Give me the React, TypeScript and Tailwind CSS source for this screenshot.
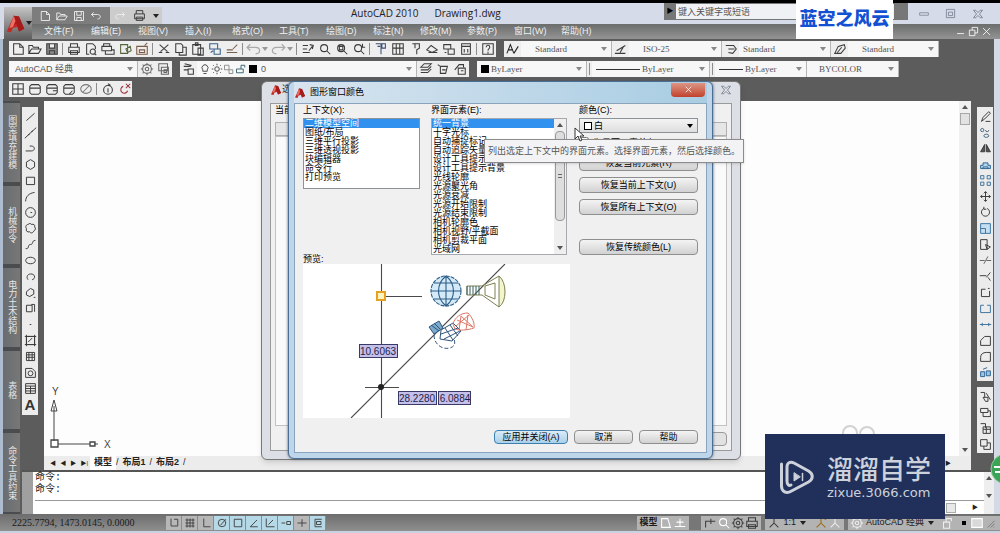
import React from 'react';

interface GlyphProps {
  d: string;
  color?: string;
  fill?: string;
  size?: number;
}

const Glyph: React.FC<GlyphProps> = ({ d, color = '#3c3c3c', fill = 'none', size = 14 }) => (
  <svg width={size} height={size} viewBox="0 0 16 16" fill={fill} stroke={color} strokeWidth="1.2" className="shrink-0">
    <path d={d} />
  </svg>
);

type Icon = { name: string; d: string; color?: string; fill?: string };

const NEW = 'M3 2h7l4 4v8H3zM10 2v4h4';
const OPEN = 'M1 13V4h4l1 2h6v2M1 13l3-5h11l-3 5z';
const SAVE = 'M2 2h12v12H2zM5 2v5h6V2M5 14v-4h6v4';
const PRINT = 'M4 6V2h8v4M2 6h12v6H2zM4 10h8v4H4z';
const UNDO = 'M2 6h8c5 0 5 6 0 6M5 3L2 6l3 3';
const REDO = 'M14 6H6c-5 0-5 6 0 6M11 3l3 3-3 3';
const LAYERS = 'M2 6l4-4h8l-4 4zM2 9h8l4-4M2 12h8l4-4';
const ZOOM = 'M11 7a4 4 0 1 1-8 0 4 4 0 0 1 8 0M10 10l4 4';
const GEAR = 'M13 8a5 5 0 1 1-10 0 5 5 0 0 1 10 0M10 8a2 2 0 1 1-4 0 2 2 0 0 1 4 0M8 1v2M8 13v2M1 8h2M13 8h2M3 3l1 1M12 12l1 1M13 3l-1 1M4 12l-1 1';
const BOX = 'M2 5l2-2h8l2 2v7l-2 2H4l-2-2zM2 7h12';

const standardGroups: Icon[][] = [
  [
    { name: '新建', d: NEW },
    { name: '打开', d: OPEN },
    { name: '保存', d: SAVE, fill: '#8a8a8a' },
  ],
  [
    { name: '打印', d: PRINT },
    { name: '打印预览', d: 'M3 2h7l3 3v3M3 2v12h3M13 11a3 3 0 1 1-6 0 3 3 0 0 1 6 0M12 13l2 2' },
    { name: '发布', d: 'M3 5V2h7v3M1 5h11v5H1zM5 10v4h10V9h-3' },
    { name: '三维DWF', d: 'M3 3h8v10H3zM9 8l5-3 1 5-4 2z', color: '#53663c' },
    { name: '电子传递', d: 'M2 5h12v9H2zM5 9h6v3H5zM11 4l3-3', color: '#7b5a46' },
  ],
  [
    { name: '剪切', d: 'M3 3l9 8M13 3l-9 8M2 12h4M10 12h4' },
    { name: '复制', d: 'M2 2h6l2 2v8H2zM6 12v3h8V6h-4' },
    { name: '粘贴', d: 'M2 3h9v11H2zM5 1h3v3H5zM8 7h6v8H8z' },
    { name: '粘贴为块', d: 'M2 2h9v6H2zM7 8h7v6H7zM3 12l3-2', color: '#39608a' },
    { name: '特性匹配', d: 'M2 9h7M2 12h12M9 8l5-5', color: '#75604d' },
  ],
];

const zoomIcons: Icon[] = [
  { name: '平移', d: 'M2 4h6M2 8h5M2 12h8M9 10l4-5M10 3l4 1-1 4' },
  { name: '实时缩放', d: ZOOM },
  { name: '窗口缩放', d: ZOOM + 'M5 5h4v4H5z' },
  { name: '缩放上一个', d: ZOOM + 'M12 2v4h3' },
];

const paletteIcons: Icon[] = [
  { name: '特性', d: 'M2 2h6v12M4 5h3M9 2h4v5H9z', color: '#3a4f74' },
  { name: '设计中心', d: 'M2 2h12v12H2zM6 2v12M10 2v12M2 7h12' },
  { name: '工具选项板', d: 'M5 2h8v5l-3 2v5M8 2v5' },
  { name: '图纸集', d: 'M2 9l5-5 7 5-6 3zM4 12h10' },
  { name: '标记集', d: 'M2 3h8v5H2zM7 8h7v6H7zM3 12h2' },
  { name: '计算器', d: 'M3 2h10v12H3zM3 5h10M6 8v4M10 8v4' },
];

const orbitIcons: Icon[] = [
  { name: '视口', d: 'M2 2h12v12H2zM8 2v12M2 8h12' },
  { name: '上一视口', d: BOX },
  { name: '俯视', d: BOX + 'M9 10h5' },
  { name: '仰视', d: BOX + 'M8 14l4-4' },
  { name: '消隐', d: 'M14 8a6 5 0 1 1-12 0 6 5 0 0 1 12 0M4 12l8-8', color: '#777777' },
];

const drawIcons: Icon[] = [
  { name: '直线', d: 'M3 13L13 4' },
  { name: '构造线', d: 'M1 15L15 2M5 11l2-1M9 7l2-1' },
  { name: '多段线', d: 'M2 11h7c5 0 5-6 0-6H7' },
  { name: '多边形', d: 'M8 2l5 3v6l-5 3-5-3V5z' },
  { name: '矩形', d: 'M3 4h10v9H3z' },
  { name: '圆弧', d: 'M2 14c0-6 4-10 11-11' },
  { name: '圆', d: 'M14 8A6 6 0 1 1 2 8a6 6 0 0 1 12 0M8 8h2' },
  { name: '修订云线', d: 'M5 3c2-2 4-1 4 0 3-1 5 1 4 3 2 2 1 4-1 5-1 3-4 3-5 1-3 1-5-1-4-4-2-2 0-5 2-5z' },
  { name: '样条曲线', d: 'M2 13c5 1 2-5 6-5s1-5 6-5' },
  { name: '椭圆', d: 'M14 8a6 4 0 1 1-12 0 6 4 0 0 1 12 0' },
  { name: '椭圆弧', d: 'M5 12c-3-4 0-8 5-7 4 1 4 6 0 7' },
  { name: '插入块', d: 'M3 7l5-4 4 2v5l-5 3-4-2zM12 14h2' },
  { name: '创建块', d: 'M3 4h7v8H3zM9 3h4v9' },
  { name: '点', d: 'M7 8h2' },
  { name: '图案填充', d: 'M3 3h10v10H3zM1 3h14M1 13h14M3 1v14M13 1v14M5 10l5-5' },
  { name: '渐变色', d: 'M3 3h10v10H3zM3 6h10M3 9h10M6 3v10M10 3v10' },
  { name: '面域', d: 'M2 3h8l4 4v7H2zM11 9a3 3 0 1 1-6 0 3 3 0 0 1 6 0' },
  { name: '表格', d: 'M2 2h12v12H2zM2 5h12M2 8h12M2 11h12M8 5v9' },
];

const modifyIcons: Icon[] = [
  { name: '删除', d: 'M3 14l2-5 7-7 2 2-7 7zM8 14h6' },
  { name: '复制对象', d: 'M6 5a2 2 0 1 1-4 0 2 2 0 0 1 4 0M12 5a2 2 0 1 1-4 0M12 12a3 2 0 1 1-6 0 3 2 0 0 1 6 0', color: '#4b6c86' },
  { name: '镜像', d: 'M7 3v9H2zM9 3v9h5z', fill: '#555555' },
  { name: '偏移', d: 'M2 13V9h3V6h6v3h3v4zM5 13v-2h6v2', color: '#2d6594', fill: '#b7d3e8' },
  { name: '阵列', d: 'M2 2h4v4H2zM10 2h4v4h-4zM2 10h4v4H2zM10 10h4v4h-4z', color: '#40739c' },
  { name: '移动', d: 'M8 2v12M2 8h12M6 4l2-2 2 2M6 12l2 2 2-2M4 6L2 8l2 2M12 6l2 2-2 2' },
  { name: '旋转', d: 'M10 3a5 5 0 1 1-4 0M6 1v3h3' },
  { name: '缩放', d: 'M2 2h12v12H2zM2 8h6v6', color: '#3b77a5', fill: '#c5dff1' },
  { name: '拉伸', d: 'M2 2h8v12H2zM8 8l6 3-4 3z' },
  { name: '修剪', d: 'M1 8h6M9 8h6M6 12l5-9', color: '#666666' },
  { name: '延伸', d: 'M1 7h8M9 9l5-6M11 9l3 4' },
  { name: '打断于点', d: 'M3 13V4h5M13 6v7H3M11 3h2' },
  { name: '打断', d: 'M6 4H2v9h12V4h-4', color: '#40739c' },
  { name: '合并', d: 'M1 8h14M4 6v4M12 6v4', color: '#40739c' },
  { name: '倒角', d: 'M2 14V8l5-5h7v11z' },
  { name: '圆角', d: 'M2 14V9c0-4 3-6 7-6h5v11z' },
  { name: '分解', d: 'M2 7h5v6H2zM9 6h5v6H9zM5 4l5-2', color: '#2d6594', fill: '#9dc4e0' },
];

const orderIcons: Icon[] = [
  { name: '前置', d: 'M2 3h5v6M5 9h6v5H8zM9 4l5 8' },
  { name: '后置', d: 'M2 3h9v5H2zM5 8v5h9V6h-3' },
  { name: '置于对象之上', d: 'M2 2h6v5M5 6h9v8H5zM5 9h9M9 6v8' },
  { name: '置于对象之下', d: 'M2 2h8v8H2zM6 10v4h8V6h-4' },
];

const snapModes: { name: string; d: string; on: boolean }[] = [
  { name: '捕捉', d: 'M4 2v10h9V3H8', on: false },
  { name: '栅格', d: 'M2 4h12M2 8h12M2 12h12M4 2v12M8 2v12M12 2v12', on: false },
  { name: '正交', d: 'M5 2v11h9', on: false },
  { name: '极轴', d: 'M13 8A5 5 0 1 1 3 8a5 5 0 0 1 10 0M6 11l7-8', on: true },
  { name: '对象捕捉', d: 'M3 3h10v10H3z', on: true },
  { name: '对象追踪', d: 'M13 13H3l9-9', on: true },
  { name: '动态UCS', d: 'M3 2v11h11M6 10l6-6', on: true },
  { name: '动态输入', d: 'M2 8h5M9 6h5v4H9z', on: true },
  { name: '线宽', d: 'M2 8h12M8 3v10', on: false },
  { name: '快捷特性', d: 'M4 3h9M4 3v10h9M6 6h6v4H6z', on: true },
];

const menus = ['文件(F)', '编辑(E)', '视图(V)', '插入(I)', '格式(O)', '工具(T)', '绘图(D)', '标注(N)', '修改(M)', '参数(P)', '窗口(W)', '帮助(H)'];
const paletteTabs = ['图案填充建模', '机械命令', '电力土木结构', '表格', '命令工具约束'];
const contexts = ['二维模型空间', '图纸/布局', '三维平行投影', '三维透视投影', '块编辑器', '命令行', '打印预览'];
const elements = [
  '统一背景', '十字光标', '自动捕捉标记', '自动追踪矢量', '设计工具提示', '设计工具提示背景', '光线轮廓', '光源聚光角',
  '光源衰减', '光源开始限制', '光源结束限制', '相机轮廓色', '相机视野/平截面', '相机剪裁平面', '光域网',
];

const ToolButton: React.FC<{ icon: Icon }> = ({ icon }) => (
  <button type="button" aria-label={icon.name} className="flex h-4 w-[17px] shrink-0 items-center justify-center">
    <Glyph d={icon.d} color={icon.color} fill={icon.fill} />
  </button>
);

const Separator = () => <span className="mx-0.5 h-3 w-px shrink-0 bg-[#8c8c8c]" />;

const Bar: React.FC<{ children: React.ReactNode; className?: string }> = ({ children, className = '' }) => (
  <div className={`flex h-4 shrink-0 items-center bg-[#eeeeee] ${className}`}>{children}</div>
);

const Caret: React.FC<{ up?: boolean; color?: string }> = ({ up = false, color = '#555555' }) => (
  <svg width="6" height="4" viewBox="0 0 6 4" fill={color} className="shrink-0">
    <path d={up ? 'M0 4h6L3 0z' : 'M0 0h6L3 4z'} />
  </svg>
);

const Picker: React.FC<{ label: string; value: string; className?: string; pad?: string; before?: React.ReactNode }> = ({
  label, value, className = '', pad = 'pl-2', before,
}) => (
  <span className={`flex h-full min-w-0 shrink-0 items-center border-r border-[#b5b5b5] bg-[#f7f7f7] pr-1 ${className}`}>
    {before}
    <select
      aria-label={label}
      className={`h-full min-w-0 flex-1 appearance-none bg-transparent text-[9px] leading-4 text-[#555555] ${pad}`}
    >
      <option>{value}</option>
    </select>
    <Caret color="#888888" />
  </span>
);

const AcadLogo: React.FC<{ size: number }> = ({ size }) => (
  <svg width={size} height={size} viewBox="0 0 24 24" className="shrink-0">
    <path d="M2 21L10 3l6 1 6 14-6 3-2-5-5 1-2 5z" fill="#c32a25" />
    <path d="M10 3l6 1 6 14-6 3-3-9-2 2z" fill="#a51b1b" />
    <path d="M10 3L5 17l4-1 3-7z" fill="#ee7064" />
  </svg>
);

const Header = () => (
  <header className="flex h-9 shrink-0 bg-[#d5dbe9] pl-1">
    <button type="button" aria-label="应用程序菜单" className="mt-1 flex w-7 shrink-0 items-center justify-center bg-linear-to-b from-[#c4c4c4] to-[#5f5f5f]">
      <AcadLogo size={21} />
      <Caret color="#222222" />
    </button>
    <div className="flex min-w-0 flex-1 flex-col">
      <div className="flex h-[21px] shrink-0">
        <div className="mt-1 flex h-[17px] w-[130px] shrink-0 items-center bg-[#7d7d7d] pl-1">
          {[NEW, OPEN, SAVE, UNDO].map((d) => (
            <button key={d} type="button" aria-label="快速访问" className="flex w-[17px] justify-center">
              <Glyph d={d} color="#eeeeee" size={12} />
            </button>
          ))}
          <span className="ml-1.5 flex h-full flex-1 items-center justify-around bg-[#cccccc]">
            <Glyph d={REDO} color="#eeeeee" size={12} />
            <Glyph d={PRINT} size={13} />
            <Caret color="#222222" />
          </span>
        </div>
        <h1 className="ml-[189px] flex flex-1 gap-4 font-['Open_Sans',sans-serif] text-[10px] leading-5 text-[#222222]">
          <span>AutoCAD 2010</span>
          <span>Drawing1.dwg</span>
        </h1>
        <div className="flex h-[17px] w-[244px] shrink-0 items-center bg-[#777777]">
          <span className="flex w-3 justify-center text-[7px] text-black">▶</span>
          <input aria-label="搜索" placeholder="键入关键字或短语" className="h-[15px] min-w-0 flex-1 bg-[#f0f1f4] pl-0.5 text-[9px] text-[#555555] placeholder:text-[#555555]" />
          <span className="w-3.5" />
        </div>
        <div className="flex w-[92px] shrink-0 items-center justify-end gap-4 pr-4">
          <Glyph d="M1 6h14v4H1z" color="#77808f" size={10} />
          <Glyph d="M2 2h12v12H2zM5 6h6v5H5z" color="#77808f" size={11} />
          <Glyph d="M2 3h3l3 3 3-3h3l-4 5 4 5h-3l-3-3-3 3H2l4-5z" color="#77808f" size={12} />
        </div>
      </div>
      <nav className="flex flex-1 items-center bg-linear-to-b from-[#6b6d6c] to-[#949494] pl-3">
        {menus.map((m) => (
          <button key={m} type="button" className="w-[47px] shrink-0 text-left text-[9px] leading-[15px] whitespace-nowrap text-[#f0f0f0]">
            {m}
          </button>
        ))}
        <span className="ml-auto flex gap-0.5 pr-2 text-white">
          <Glyph d="M3 11h10" color="#ffffff" size={11} />
          <Glyph d="M2 6h8v8H2zM6 6V2h8v8h-4" color="#ffffff" size={11} />
          <Glyph d="M3 3l10 10M13 3L3 13" color="#ffffff" size={11} />
        </span>
      </nav>
    </div>
  </header>
);

const Toolbars = () => (
  <div className="flex flex-col gap-1 pt-0.5 pl-1.5">
    <div className="flex gap-2">
      <Bar className="w-[487px]">
        {standardGroups.map((group, i) => (
          <React.Fragment key={i}>
            {i > 0 && <Separator />}
            {group.map((icon) => <ToolButton key={icon.name} icon={icon} />)}
          </React.Fragment>
        ))}
        <Separator />
        <Glyph d={UNDO} color="#aaaaaa" size={17} />
        <Caret color="#999999" />
        <span className="w-1" />
        <Glyph d={REDO} color="#aaaaaa" size={17} />
        <Caret color="#999999" />
        <span className="w-1" />
        <Separator />
        {zoomIcons.map((icon) => <ToolButton key={icon.name} icon={icon} />)}
        <Separator />
        {paletteIcons.map((icon) => <ToolButton key={icon.name} icon={icon} />)}
        <Separator />
        <ToolButton icon={{ name: '帮助', d: 'M2 2h12v12H2zM6 6c0-3 4-3 4 0 0 2-2 1-2 4M8 11v2' }} />
      </Bar>
      <Bar className="font-['Liberation_Serif',serif]">
        <ToolButton icon={{ name: '文字样式', d: 'M1 13L5 3l4 10M3 9h5M9 13l5-8', color: '#222222' }} />
        <Picker label="文字样式" value="Standard" className="w-[91px]" pad="pl-3.5" />
        <ToolButton icon={{ name: '标注样式', d: 'M1 13h12M3 10l10-6M7 12l4-7' }} />
        <Picker label="标注样式" value="ISO-25" className="w-[93px]" pad="pl-3.5" />
        <ToolButton icon={{ name: '表格样式', d: 'M2 4h9l3 4-4 5-5-1M5 8h7' }} />
        <Picker label="表格样式" value="Standard" className="w-[92px]" pad="pl-1" />
        <ToolButton icon={{ name: '多重引线样式', d: 'M2 13l4-8 7-2 1 4-5 6zM5 12l5-6' }} />
        <Picker label="多重引线样式" value="Standard" className="w-[91px]" pad="pl-3.5" />
      </Bar>
    </div>

    <div className="flex gap-2">
      <Bar className="w-[163px]">
        <Picker label="工作空间" value="AutoCAD 经典" className="w-[129px]" pad="pl-1.5" />
        <ToolButton icon={{ name: '工作空间设置', d: GEAR, color: '#666666' }} />
        <ToolButton icon={{ name: '我的工作空间', d: 'M2 2h10v8H2zM5 6h8v8H5zM8 9h3v3H8z', color: '#666666' }} />
      </Bar>
      <Bar className="w-[289px]">
        <ToolButton icon={{ name: '图层特性', d: 'M2 5h8M2 9h5M7 8h6v6H7zM3 2l8 2' }} />
        <Picker
          label="图层"
          value="0"
          className="w-[220px]"
          pad="pl-1"
          before={
            <span className="flex items-center pl-0.5">
              <Glyph d="M5 9a4 4 0 1 1 6 0v2H5zM6 14h4" size={12} />
              <Glyph d="M11 8a3 3 0 1 1-6 0 3 3 0 0 1 6 0M8 1v2M8 13v2M1 8h2M13 8h2M3 3l1 1M12 12l1 1M13 3l-1 1M4 12l-1 1" size={12} />
              <Glyph d="M2 3h6v6H2zM8 9h5v5H8z" color="#888888" size={12} />
              <Glyph d="M2 8h9v5H2zM8 8V3h5v3" color="#2b5b68" size={12} />
              <span className="ml-0.5 h-2 w-2 bg-black" />
            </span>
          }
        />
        <ToolButton icon={{ name: '置为当前', d: LAYERS }} />
        <ToolButton icon={{ name: '上一个图层', d: 'M2 3l3 2M5 5h8l-2 8H5zM7 9h4' }} />
        <ToolButton icon={{ name: '图层状态', d: 'M2 9l5-6h5v3M6 7h8v7H6zM9 10h3' }} />
      </Bar>
      <Bar className="font-['Liberation_Serif',serif]">
        <Picker label="颜色" value="ByLayer" className="w-[110px]" pad="pl-0.5" before={<span className="ml-1 h-2 w-2 bg-black" />} />
        <Separator />
        <Picker label="线型" value="ByLayer" className="w-[118px]" pad="pl-0.5" before={<span className="ml-1 h-px w-11 bg-[#333333]" />} />
        <Separator />
        <Picker label="线宽" value="ByLayer" className="w-[92px]" pad="pl-0.5" before={<span className="ml-1 h-px w-6 bg-[#333333]" />} />
        <Picker label="打印样式" value="BYCOLOR" className="w-[92px]" pad="pl-3" />
      </Bar>
    </div>

    <div className="flex">
      <Bar className="w-[123px]">
        {orbitIcons.map((icon) => <ToolButton key={icon.name} icon={icon} />)}
        <Separator />
        <ToolButton icon={{ name: '动态观察', d: 'M13 9A5 5 0 1 1 3 9a5 5 0 0 1 10 0M8 7v5M8 2l3 2' }} />
        <ToolButton icon={{ name: '关闭', d: 'M11 10a4 4 0 1 1-5-5M9 2l5 5M14 2L9 7', color: '#9b3440' }} />
      </Bar>
    </div>
  </div>
);

const PaletteTabs = () => (
  <aside className="flex w-[17px] shrink-0 flex-col gap-1 bg-[#4a4c50] py-0.5">
    {paletteTabs.map((t) => (
      <button
        key={t}
        type="button"
        className="flex flex-1 items-center justify-center bg-linear-to-r from-[#6a6c70] to-[#777777] text-[9px] whitespace-nowrap text-[#e6e6e6] [writing-mode:vertical-rl]"
      >
        {t}
      </button>
    ))}
  </aside>
);

const SideTools: React.FC<{ icons: Icon[]; children?: React.ReactNode }> = ({ icons, children }) => (
  <div className="flex w-4 flex-col items-center gap-0.5 bg-[#ececec] py-0.5">
    {icons.map((icon) => (
      <button key={icon.name} type="button" aria-label={icon.name} className="flex h-3.5 w-4 items-center justify-center">
        <Glyph d={icon.d} color={icon.color} fill={icon.fill} size={13} />
      </button>
    ))}
    {children}
  </div>
);

const Canvas = () => (
  <div className="flex min-w-0 flex-1 flex-col">
    <div className="flex flex-1 bg-[#fdfdfd]">
      <div className="flex flex-1 items-end">
        <svg width="75" height="70" viewBox="0 0 75 70" fill="none" stroke="#444444">
          <path d="M10 55V20M7 25l3-11 3 11zM14 58h32M54 58h-4" />
          <path d="M7 54h7v7H7zM46 56h5v4h-5z" strokeWidth="1.3" />
          <text x="8" y="9" fontSize="10" fill="#444444" stroke="none">Y</text>
          <text x="60" y="62" fontSize="10" fill="#444444" stroke="none">X</text>
        </svg>
      </div>
      <div className="flex w-3 flex-col items-center bg-[#f0f0f0] py-1">
        <Caret up />
        <span className="mt-1 h-3 w-2.5 border border-[#a8a8a8] bg-[#e2e2e2]" />
        <span className="flex-1" />
        <Caret />
      </div>
    </div>
    <div className="flex h-3.5 shrink-0 items-center bg-[#ececec] pl-1 text-[9px] text-[#222222]">
      <span className="flex w-[42px] items-center justify-around text-[6px]">
        <span>◀</span><span>◀</span><span>▶</span><span>▶|</span>
      </span>
      <button type="button" className="bg-white px-1 font-bold">模型</button>
      <span>/</span>
      <button type="button" className="px-1 font-bold">布局1</button>
      <span>/</span>
      <button type="button" className="px-1 font-bold">布局2</button>
      <span>/</span>
      <span className="ml-auto pr-5 text-[6px]">▶</span>
    </div>
  </div>
);

const CommandLine = () => (
  <div className="flex h-11 shrink-0 border-t-2 border-[#555555]">
    <span className="w-[11px] bg-[#a0a0a0]" />
    <div className="flex min-w-0 flex-1 flex-col bg-white pl-0.5 font-['Liberation_Mono','Noto_Sans_CJK_SC',monospace] text-[10px] leading-3 text-[#222222]">
      <p>命令:</p>
      <p>命令:</p>
      <div className="mt-1 flex flex-1 items-center border-t border-[#999999]">
        <input aria-label="命令" className="h-full min-w-0 flex-1 bg-white" />
        <span className="mr-4 h-2.5 w-2.5 border border-[#aaaaaa] bg-[#e8e8e8]" />
        <span className="mr-1.5 text-[6px]">▶</span>
      </div>
    </div>
    <div className="flex w-2.5 flex-col items-center justify-between bg-[#eeeeee] pt-1 pb-4">
      <Caret up />
      <Caret />
    </div>
  </div>
);

const StatusBar = () => (
  <footer className="flex h-[17px] shrink-0 items-center bg-linear-to-b from-[#6d6d6d] to-[#8f8f8f] pl-3 text-[9px] text-[#1c1c1c]">
    <span className="w-[154px] font-['Liberation_Serif',serif] text-[10px]">2225.7794, 1473.0145, 0.0000</span>
    {snapModes.map((m) => (
      <button
        key={m.name}
        type="button"
        aria-label={m.name}
        className={`flex h-3.5 w-4 items-center justify-center border-r border-[#8b8b8b] ${m.on ? 'bg-[#b5d9e6]' : 'bg-[#b7b7b7]'}`}
      >
        <Glyph d={m.d} size={12} />
      </button>
    ))}
    <div className="ml-auto flex h-3.5 items-center bg-[#b3b3b3] pr-1">
      <button type="button" className="px-0.5 font-bold">模型</button>
      <Glyph d="M3 3h7l3 10H3z" color="#ffffff" />
      <Glyph d="M2 12h12M8 3v9M4 7h8" color="#ffffff" />
      <span className="mx-0.5 h-full w-3 bg-[#777777]" />
      <Glyph d="M3 13V6h6M9 3v6M6 6h8" />
      <Glyph d={ZOOM} color="#ffffff" />
      <Glyph d={GEAR} />
      <Glyph d={PRINT} />
      <span className="mx-0.5 h-full w-1 bg-[#777777]" />
      <Glyph d="M8 3v5l-5 5M8 8l5 5" />
      <span className="flex items-center gap-1 px-0.5">1:1 <Caret color="#222222" /></span>
      <span className="w-1.5" />
      <Glyph d="M8 3v5l-5 5M8 8l5 5M11 3l3 1" color="#9a6a10" />
      <Glyph d="M8 3v5l-5 5M8 8l5 5" color="#eeeeee" />
      <span className="mx-0.5 h-full w-1 bg-[#777777]" />
      <Glyph d={GEAR} color="#eeeeee" />
      <button type="button" className="flex items-center gap-1 px-0.5">AutoCAD 经典 <Caret color="#222222" /></button>
      <span className="w-1" />
      <Glyph d="M4 7h7v7H4zM7 7V3h6v3" color="#eeeeee" />
      <span className="w-2" />
      <span className="h-1 w-1 bg-black" />
      <span className="w-1" />
      <Glyph d="M2 3h12v10H2z" color="#ffffff" fill="#d9d9d9" />
      <Glyph d="M14 5l-9 9M14 9l-5 5M14 13l-1 1" color="#777777" size={12} />
    </div>
  </footer>
);

const DialogButton: React.FC<{ children: React.ReactNode; className?: string; active?: boolean }> = ({ children, className = '', active = false }) => (
  <button
    type="button"
    className={`flex items-center justify-center rounded-sm border text-[9px] leading-3 text-black ${
      active
        ? 'border-[#3c7fb1] bg-linear-to-b from-[#dcecf7] to-[#a9d0ea]'
        : 'border-[#8e8f8f] bg-linear-to-b from-[#f4f4f4] to-[#d2d2d2]'
    } ${className}`}
  >
    {children}
  </button>
);

const ListBox: React.FC<{ id: string; items: string[] }> = ({ id, items }) => (
  <ul role="listbox" aria-labelledby={id} className="min-w-0 flex-1">
    {items.map((item, i) => (
      <li
        key={item}
        role="option"
        aria-selected={i === 0}
        className={`h-[9px] pl-px text-[9px] leading-[9px] whitespace-nowrap ${i === 0 ? 'bg-[#3191ee] text-white' : 'text-black'}`}
      >
        {item}
      </li>
    ))}
  </ul>
);

const Preview = () => (
  <svg width="267" height="154" viewBox="0 0 267 154" fill="none" className="bg-white">
    <g stroke="#4a4a4a" strokeWidth="1.1">
      <path d="M78.500 0v154M202 0L48 154M62 123.500h34M83 32.500h36" />
    </g>
    <circle cx="78" cy="123" r="3" fill="#222222" />
    <rect x="74" y="28" width="8" height="8" stroke="#e6a21f" strokeWidth="2" fill="#fff3c0" />
    <g stroke="#2a5c86" strokeWidth="1.1">
      <circle cx="143" cy="27" r="15" fill="#d5eaf8" strokeDasharray="4 1" />
      <path d="M128 27h30M131 19h24M131 35h24M143 12v30M143 12c-10 8-10 22 0 30M143 12c10 8 10 22 0 30" />
    </g>
    <g stroke="#7c8052" strokeWidth="1">
      <path d="M196 12c8 6 8 26 0 31z" fill="#f3f5cd" />
      <path d="M196 12l-17 10h-15v9h15l17 12M182 22l10-3v16l-10-4z" />
      <path d="M164 22v9M167 22v9M170 22v9M173 22v9M176 22v9" stroke="#35605c" />
    </g>
    <g stroke="#31557d" strokeWidth="1">
      <path d="M126 63l10-6 4 7-9 6zM128 61l8 6M131 59l6 6" fill="#7ba9c9" />
      <path d="M138 66l12-7 8 8-9 10-12-2zM142 64l8 12M147 61l8 11M138 70l17-6M141 75l16-8" />
      <path d="M131 71c0 9 8 15 16 13 6-2 5-6 4-9" strokeDasharray="4 2" />
    </g>
    <g stroke="#dc7767" strokeWidth="1">
      <path d="M150 60c2-7 8-11 15-11 4 4 7 10 6 15-6 2-15 3-19 1zM154 56l16 7M158 52l12 11M153 62l13-11M156 66l2-14M163 66l2-15" />
    </g>
    <g fill="#c5c0ea" stroke="#3a3a66">
      <rect x="56.500" y="80.500" width="38" height="13" />
      <rect x="95.500" y="127.500" width="38" height="13" />
      <rect x="135.500" y="127.500" width="32" height="13" />
    </g>
    <g fill="#1f1f48" fontSize="10" fontFamily="'Liberation Sans', sans-serif" textAnchor="middle">
      <text x="75" y="91">10.6063</text>
      <text x="114" y="138">28.2280</text>
      <text x="152" y="138">6.0884</text>
    </g>
  </svg>
);

const OptionsDialog = () => (
  <div className="absolute top-[81px] left-[261px] flex h-[379px] w-[480px] flex-col rounded-md border border-[#777777] bg-[#dcdfe5] px-2 pb-2 shadow-md">
    <div className="flex h-[21px] shrink-0 items-center justify-between pb-1.5 text-[9px] text-[#222222]">
      <span className="flex items-center"><AcadLogo size={12} />选</span>
      <Glyph d="M2 3h3l3 3 3-3h3l-4 5 4 5h-3l-3-3-3 3H2l4-5z" color="#77808f" size={12} />
    </div>
    <div className="flex flex-1 flex-col border border-[#9a9a9a] bg-[#f0f0f0] px-1 text-[9px]">
      <span>当前</span>
      <div className="mt-1 h-3.5 border border-[#b0b0b0] bg-[#e6e6e6]" />
      <div className="flex-1 border border-[#c2c2c2] bg-[#fafafa]" />
      <div className="mt-1.5 mb-1 ml-auto h-3.5 w-14 rounded-sm border border-[#999999] bg-[#e2e2e2]" />
    </div>
  </div>
);

const ColorDialog = () => (
  <section
    aria-label="图形窗口颜色"
    className="absolute top-[81px] left-[288px] w-[425px] rounded-md border border-[#4b6f94] bg-[#bfd5ea] px-[5px] pb-[5px] shadow-[0_0_3px_#445566]"
  >
    <div className="flex h-[21px] items-center bg-linear-to-r from-[#d8e4ef] to-[#a8cde3] text-[9px] text-black">
      <AcadLogo size={12} />
      <h2 className="ml-1">图形窗口颜色</h2>
      <button type="button" aria-label="关闭" className="mr-0.5 mb-1.5 ml-auto flex h-3.5 w-[34px] items-center justify-center rounded-b-sm bg-linear-to-b from-[#dc9585] to-[#c0402a]">
        <Glyph d="M4 4l8 8M12 4l-8 8" color="#ffffff" size={11} />
      </button>
    </div>
    <div className="border border-[#8aa4bd] bg-[#f0f0f0] px-2 pb-2 text-[9px] text-black">
      <div className="flex leading-3">
        <div className="w-[117px]">
          <p id="context-label" className="mb-0.5">上下文(X):</p>
          <div className="flex h-[71px] border border-[#8c929a] bg-white">
            <ListBox id="context-label" items={contexts} />
          </div>
        </div>
        <div className="ml-[11px] w-[136px]">
          <p id="element-label" className="mb-0.5">界面元素(E):</p>
          <div className="flex border border-[#a5a9ae] bg-white">
            <ListBox id="element-label" items={elements} />
            <div className="flex w-3 flex-col items-center bg-[#efefef] py-1">
              <Caret up />
              <span className="mt-1 flex h-[90px] w-2.5 items-center justify-center rounded-sm border border-[#9a9a9a] bg-[#dedede]">
                <span className="h-1 w-1 border-y border-[#666666]" />
              </span>
              <span className="flex-1" />
              <Caret />
            </div>
          </div>
        </div>
        <div className="ml-3 flex w-[119px] flex-col">
          <label htmlFor="color" className="mb-0.5">颜色(C):</label>
          <div className="flex h-[15px] items-center border border-[#8c929a] bg-linear-to-b from-[#f4f4f4] to-[#dedede] px-1">
            <span className="h-2 w-2 border border-black bg-white" />
            <select id="color" className="h-full flex-1 appearance-none bg-transparent pl-0.5 text-[9px] leading-3">
              <option>白</option>
            </select>
            <Caret color="#000000" />
          </div>
          <label className="mt-1 flex h-4 items-start gap-1">
            <input type="checkbox" className="h-2.5 w-2.5" />
            为界面元素着色(T)
          </label>
          <DialogButton className="mt-0.5 h-4">恢复当前元素(R)</DialogButton>
          <DialogButton className="mt-1.5 h-4">恢复当前上下文(U)</DialogButton>
          <DialogButton className="mt-1.5 h-4">恢复所有上下文(O)</DialogButton>
          <DialogButton className="mt-6 h-4">恢复传统颜色(L)</DialogButton>
        </div>
      </div>
      <p className="leading-[9px]">预览:</p>
      <Preview />
      <div className="mt-3 flex justify-end gap-1.5">
        <DialogButton active className="h-3.5 w-[74px]">应用并关闭(A)</DialogButton>
        <DialogButton className="h-3.5 w-[59px]">取消</DialogButton>
        <DialogButton className="h-3.5 w-[59px]">帮助</DialogButton>
      </div>
    </div>
  </section>
);

const SiteBadge = () => (
  <div className="absolute right-[55px] bottom-3.5 flex h-[85px] w-[180px] items-center bg-[#20305a] pl-3.5 text-[#cdd1dc]">
    <svg width="36" height="36" viewBox="0 0 36 36" fill="none" stroke="#cdd1dc" strokeLinecap="round" strokeLinejoin="round" className="shrink-0">
      <path d="M2.500 5v22c0 6 5 8 10 5l17-9c5-3 5-8 0-11L15 4c-4-2-7 0-7 4v14c0 4 2 5 4 4" strokeWidth="3" />
      <path d="M15 14v8l6-4z" fill="#cdd1dc" strokeWidth="1" />
      <path d="M23.500 14.500v7" strokeWidth="1.500" />
    </svg>
    <div className="ml-3 flex flex-col">
      <span className="text-[26px] leading-8 font-medium">溜溜自学</span>
      <span className="font-['DejaVu_Sans',sans-serif] text-[13px] leading-3.5 whitespace-nowrap">zixue.3066.com</span>
    </div>
  </div>
);

export default function App() {
  return (
    <div className="relative flex min-h-screen flex-col overflow-hidden bg-black pt-[3px] font-['Liberation_Sans','Noto_Sans_CJK_SC',sans-serif]">
      <Header />
      <main className="flex flex-1 flex-col gap-1 border-r-[6px] border-l-[3px] border-r-[#d3d9e5] border-l-[#aebccf] bg-[#5c5c5c]">
        <Toolbars />
        <div className="flex flex-1">
          <PaletteTabs />
          <div className="flex min-w-0 flex-1 flex-col pl-0.5">
            <div className="flex flex-1">
              <div className="mr-1.5 pt-1.5">
                <SideTools icons={drawIcons}>
                  <button type="button" aria-label="多行文字" className="h-4 text-[15px] leading-4 font-bold text-[#333333]">A</button>
                </SideTools>
              </div>
              <Canvas />
              <div className="ml-1.5 flex flex-col gap-1.5 pt-1.5 pr-px">
                <SideTools icons={modifyIcons} />
                <SideTools icons={orderIcons} />
              </div>
            </div>
            <CommandLine />
          </div>
        </div>
      </main>
      <StatusBar />
      <div className="h-0.5 shrink-0 bg-[#c9d2e0]" />

      <OptionsDialog />
      <ColorDialog />
      <div role="tooltip" className="absolute top-[139px] left-[484px] border border-[#8c8c8c] bg-[#f3f3f5] px-[3px] text-[9px] leading-[22px] whitespace-nowrap text-[#555555] shadow-sm">
        列出选定上下文中的界面元素。选择界面元素，然后选择颜色。
      </div>
      <svg width="10" height="15" viewBox="0 0 10 15" className="absolute top-[127px] left-[574px]">
        <path d="M1 1v11l3-3 2 5 2-1-2-4h4z" fill="#ffffff" stroke="#333333" />
      </svg>

      <div className="absolute top-0 right-[107px] flex h-[39px] w-[97px] items-center justify-center bg-white text-[18px] font-black whitespace-nowrap text-[#1450d2]">
        蓝空之风云
      </div>
      <svg width="36" height="12" viewBox="0 0 36 12" fill="none" stroke="#d2d2d2" strokeWidth="2" className="absolute right-[124px] bottom-[97px]">
        <circle cx="10" cy="9" r="7" />
        <circle cx="27" cy="10" r="7" />
      </svg>
      <SiteBadge />
      <svg width="10" height="32" viewBox="0 0 10 32" className="absolute right-0 bottom-[48px]">
        <circle cx="16" cy="16" r="15" fill="#3aa655" stroke="#8ed09c" />
        <path d="M4 14h6M5 19h5" stroke="#ffffff" strokeWidth="2" />
      </svg>
    </div>
  );
}
